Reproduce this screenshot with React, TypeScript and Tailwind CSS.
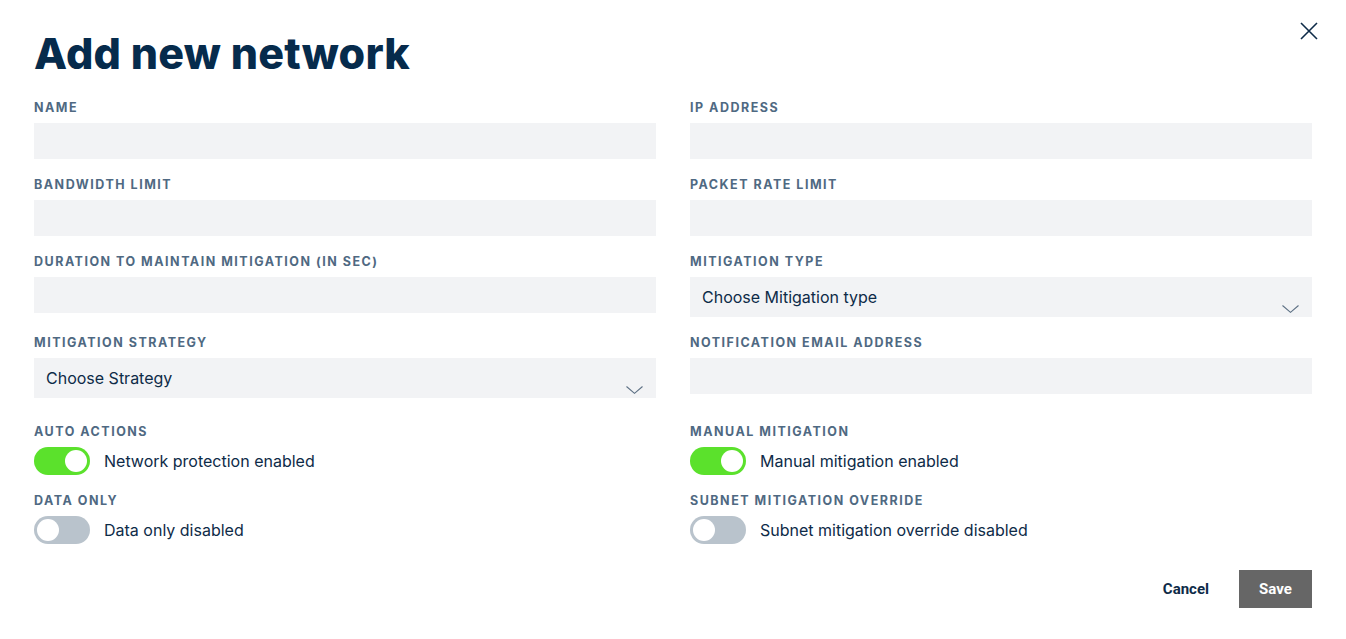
import React from "react";

const font = { fontFamily: "Inter, 'Noto Sans', sans-serif" };

const Label = ({ children }: { children: React.ReactNode }) => (
  <div className="mb-2 h-4 text-[12.5px] font-bold uppercase leading-[18px] tracking-[1.5px] text-[#4f6982]">
    {children}
  </div>
);

const TextField = ({ label }: { label: string }) => (
  <div>
    <Label>{label}</Label>
    <div className="h-9 bg-[#f2f3f5]" />
  </div>
);

const SelectField = ({ label, placeholder }: { label: string; placeholder: string }) => (
  <div>
    <Label>{label}</Label>
    <div className="relative flex h-10 items-center bg-[#f2f3f5] px-3 text-base text-[#0e2b48]">
      {placeholder}
      <svg
        className="absolute bottom-1 right-[13px]"
        width="17"
        height="8"
        viewBox="0 0 17 8"
        fill="none"
      >
        <path d="M0.5 0.5 L8.5 7.3 L16.5 0.5" stroke="#5d7084" strokeWidth="1.1" />
      </svg>
    </div>
  </div>
);

const Toggle = ({ label, title, on }: { label: string; title: string; on: boolean }) => (
  <div>
    <Label>{label}</Label>
    <div className="flex items-center gap-[14px]">
      <div
        className={`flex h-7 w-14 items-center rounded-full p-[3px] ${
          on ? "justify-end bg-[#5be12c]" : "justify-start bg-[#b9c3cc]"
        }`}
      >
        <div className="h-[22px] w-[22px] rounded-full bg-white" />
      </div>
      <span className="text-base text-[#0e2b48]">{title}</span>
    </div>
  </div>
);

export default function App() {
  return (
    <div className="relative h-[639px] w-[1346px] bg-white px-[34px] pt-[26px]" style={font}>
      <button className="absolute right-[28px] top-[22px]" aria-label="Close">
        <svg width="18" height="18" viewBox="0 0 18 18" fill="none">
          <path d="M1 1 L17 17 M17 1 L1 17" stroke="#0e2b48" strokeWidth="1.6" />
        </svg>
      </button>

      <h1
        className="text-[43px] font-extrabold leading-[54px] tracking-[0.2px] text-[#062b4c]"
        style={{ fontFamily: "Inter, 'Open Sans', sans-serif" }}
      >
        Add new network
      </h1>

      <div className="mt-[19px] grid grid-cols-2 gap-x-[34px] gap-y-[17px]">
        <TextField label="Name" />
        <TextField label="IP Address" />
        <TextField label="Bandwidth limit" />
        <TextField label="Packet rate limit" />
        <TextField label="Duration to maintain mitigation (in sec)" />
        <SelectField label="Mitigation type" placeholder="Choose Mitigation type" />
        <SelectField label="Mitigation strategy" placeholder="Choose Strategy" />
        <TextField label="Notification email address" />
      </div>

      <div className="mt-[25px] grid grid-cols-2 gap-x-[34px] gap-y-[17px]">
        <Toggle label="Auto actions" title="Network protection enabled" on />
        <Toggle label="Manual mitigation" title="Manual mitigation enabled" on />
        <Toggle label="Data only" title="Data only disabled" on={false} />
        <Toggle
          label="Subnet mitigation override"
          title="Subnet mitigation override disabled"
          on={false}
        />
      </div>

      <div
        className="mt-[26px] flex items-center justify-end gap-[30px]"
        style={{ fontFamily: "Roboto, 'Liberation Sans', sans-serif" }}
      >
        <button className="text-[15px] font-bold text-[#0e2b48]">Cancel</button>
        <button className="h-[38px] w-[73px] bg-[#666666] text-[15px] font-bold text-white">
          Save
        </button>
      </div>
    </div>
  );
}
